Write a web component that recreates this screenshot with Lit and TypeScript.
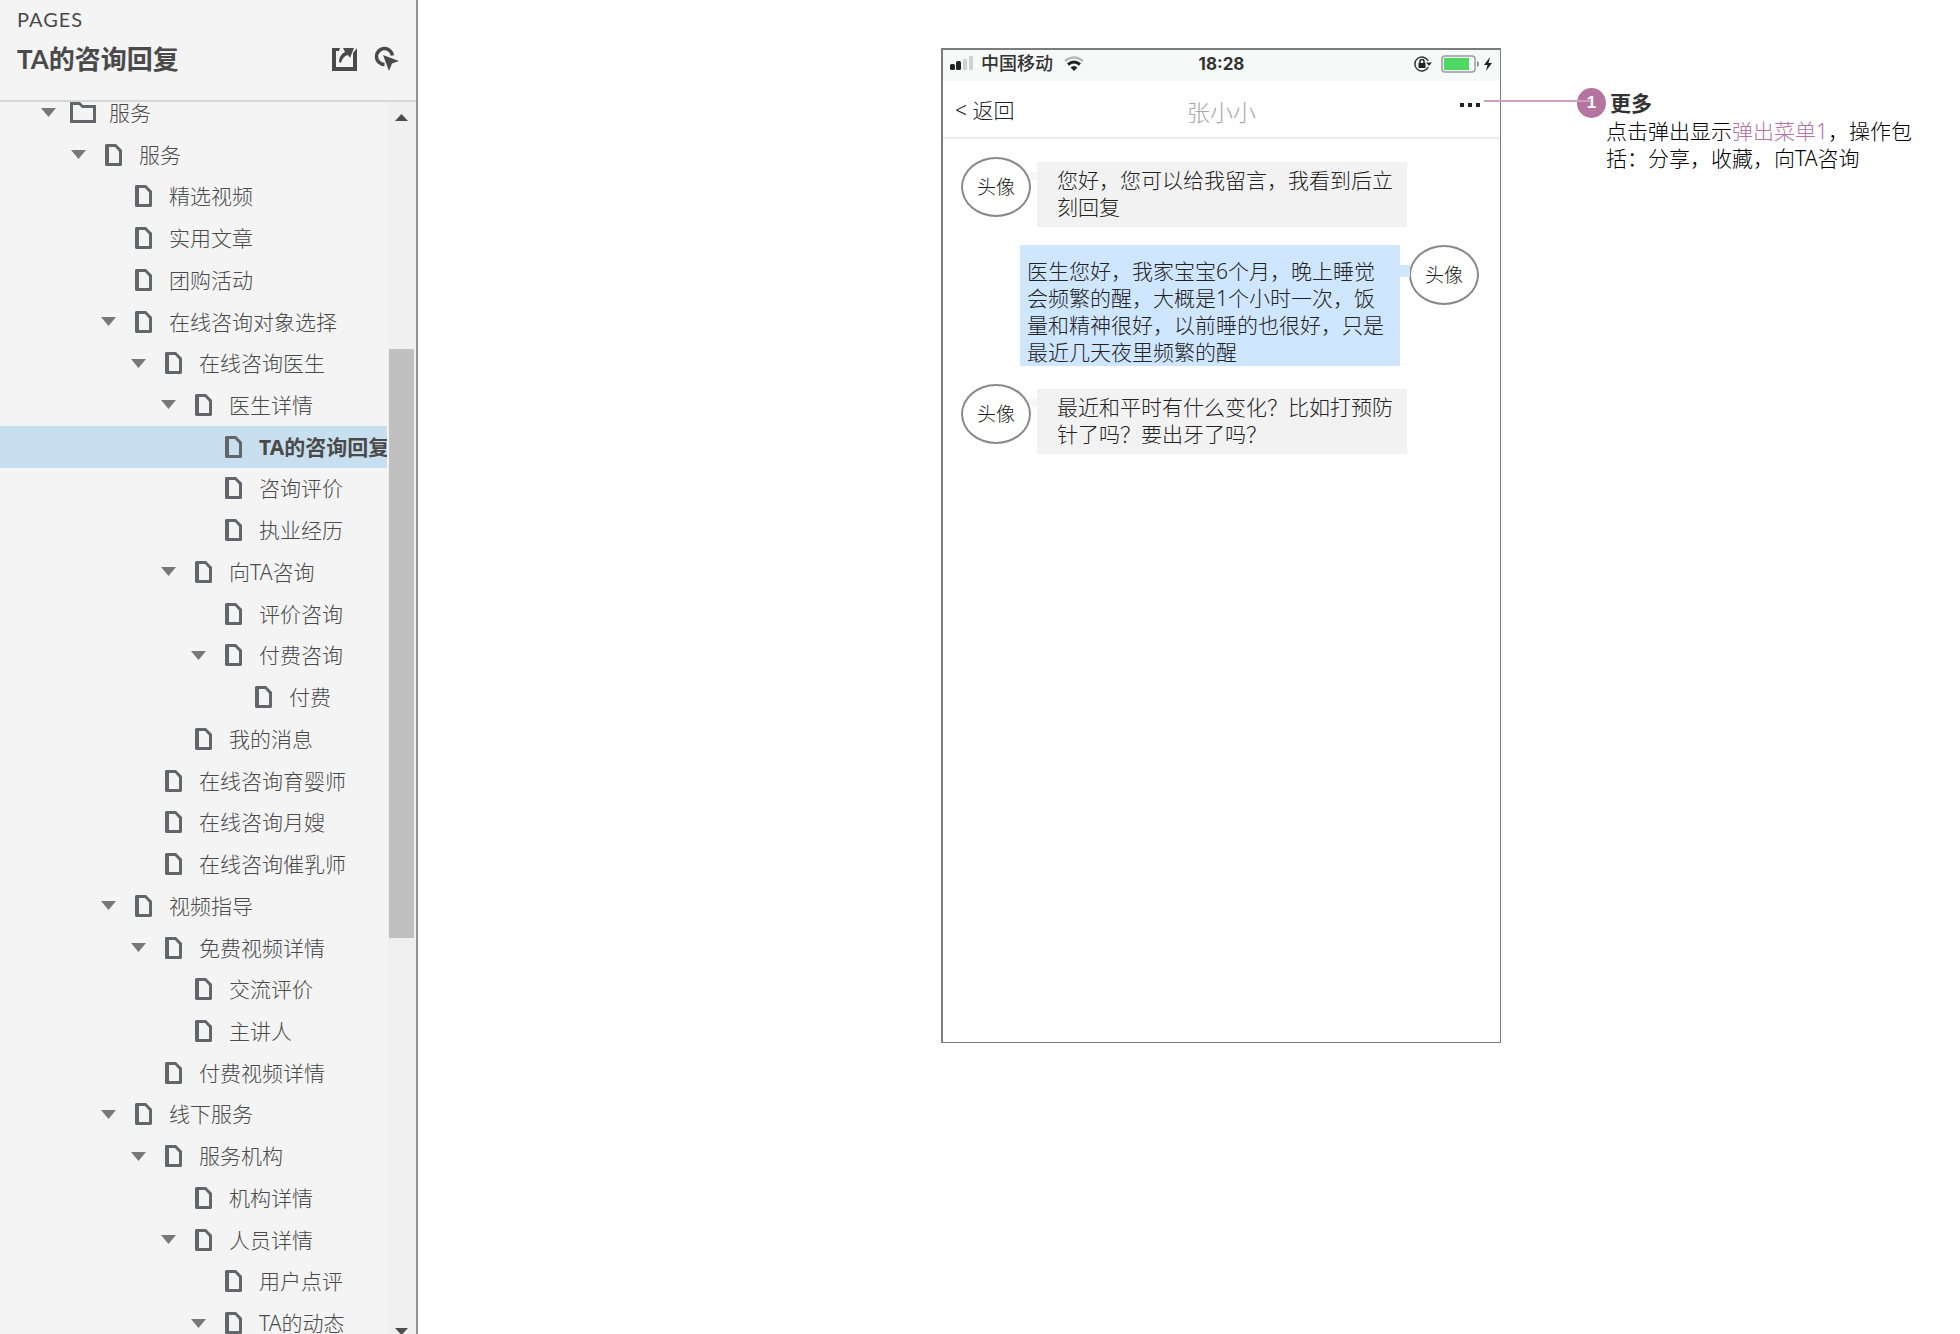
import { LitElement, html, svg, css } from "lit";
import { customElement, property } from "lit/decorators.js";
import { classMap } from "lit/directives/class-map.js";

interface PageNode {
  name: string;
  level: number;
  open?: boolean;
  folder?: boolean;
  current?: boolean;
}

const PAGES: PageNode[] = [
  { name: "服务", level: 0, open: true, folder: true },
  { name: "服务", level: 1, open: true },
  { name: "精选视频", level: 2 },
  { name: "实用文章", level: 2 },
  { name: "团购活动", level: 2 },
  { name: "在线咨询对象选择", level: 2, open: true },
  { name: "在线咨询医生", level: 3, open: true },
  { name: "医生详情", level: 4, open: true },
  { name: "TA的咨询回复", level: 5, current: true },
  { name: "咨询评价", level: 5 },
  { name: "执业经历", level: 5 },
  { name: "向TA咨询", level: 4, open: true },
  { name: "评价咨询", level: 5 },
  { name: "付费咨询", level: 5, open: true },
  { name: "付费", level: 6 },
  { name: "我的消息", level: 4 },
  { name: "在线咨询育婴师", level: 3 },
  { name: "在线咨询月嫂", level: 3 },
  { name: "在线咨询催乳师", level: 3 },
  { name: "视频指导", level: 2, open: true },
  { name: "免费视频详情", level: 3, open: true },
  { name: "交流评价", level: 4 },
  { name: "主讲人", level: 4 },
  { name: "付费视频详情", level: 3 },
  { name: "线下服务", level: 2, open: true },
  { name: "服务机构", level: 3, open: true },
  { name: "机构详情", level: 4 },
  { name: "人员详情", level: 4, open: true },
  { name: "用户点评", level: 5 },
  { name: "TA的动态", level: 5, open: true },
];

const fileIcon = svg`<svg width="17" height="22" viewBox="0 0 17 22"><path fill="#62666b" fill-rule="evenodd" d="M1 0H11L17 6V21L16 22H1L0 21V1ZM4 3V19H14V7.500L10 3Z"/></svg>`;
const folderIcon = svg`<svg width="26" height="21" viewBox="0 0 26 21"><path fill="#62666b" fill-rule="evenodd" d="M0 0H10L13 3H26V21H0ZM3 3V18H23V6H12L9 3Z"/></svg>`;

@customElement("page-tree")
export class PageTree extends LitElement {
  static styles = css`
    :host {
      display: flex;
      flex-direction: column;
      box-sizing: border-box;
      height: 100%;
      background: #f4f4f4;
      border-right: 2px solid #8f949a;
      color: #4a4a4a;
    }
    header {
      flex: none;
      box-sizing: border-box;
      height: 102px;
      padding: 7px 16px 0 17px;
      border-bottom: 2px solid #d6d6d6;
    }
    .caption {
      margin: 0;
      font: 400 20px/24px Lato, "Open Sans", sans-serif;
      letter-spacing: 1px;
    }
    .bar {
      display: flex;
      align-items: center;
      justify-content: space-between;
      height: 56px;
    }
    h1 {
      margin: 0;
      font: 700 26px/32px Lato, "Noto Sans CJK SC", sans-serif;
    }
    .tools {
      display: flex;
      gap: 16px;
    }
    button {
      display: flex;
      align-items: center;
      justify-content: center;
      border: 0;
      padding: 0;
      background: none;
      color: #4a4a4a;
    }
    svg {
      display: block;
    }
    .body {
      flex: 1;
      min-height: 0;
      display: flex;
      overflow: hidden;
    }
    ul {
      flex: 1;
      min-width: 0;
      margin: -10px 0;
      padding: 0;
      list-style: none;
      display: grid;
      grid-auto-rows: 1fr;
      overflow: hidden;
    }
    li {
      display: flex;
      align-items: center;
      gap: 14px;
      min-width: 0;
      padding-left: calc(41px + var(--level) * 30px);
    }
    .current {
      background: #c8dff0;
    }
    .toggle {
      flex: none;
      width: 15px;
      height: 24px;
    }
    a {
      display: flex;
      align-items: center;
      gap: 13px;
      color: inherit;
      text-decoration: none;
      white-space: nowrap;
      font: 300 21px/32px "Noto Sans", "Noto Sans CJK SC", sans-serif;
    }
    .current a {
      font-weight: 700;
    }
    .icon {
      width: 26px;
      display: flex;
      justify-content: center;
    }
    .scroll {
      flex: none;
      box-sizing: border-box;
      width: 28px;
      margin-left: 1px;
      padding-right: 2px;
      display: flex;
      flex-direction: column;
      background: #f0f0f0;
    }
    .up {
      height: 30px;
    }
    .down {
      height: 6px;
      align-items: flex-start;
      overflow: hidden;
    }
    .before {
      flex: 217;
    }
    .thumb {
      flex: 589;
      margin-left: 1px;
      background: #c0c0c0;
    }
    .after {
      flex: 390;
    }
  `;

  render() {
    return html`
      <header>
        <p class="caption">PAGES</p>
        <div class="bar">
          <h1>TA的咨询回复</h1>
          <div class="tools">
            <button type="button" aria-label="Open in new window">
              <svg width="26" height="24" viewBox="0 0 26 24">
                <path d="M0 1H8L7 4H4V20H21V6L25 1V24H0Z" fill="currentColor" />
                <path d="M11 1H22L18 11L16 8C12 9 10 12 9 16L7 15C7 11 9 7 13 5Z" fill="currentColor" />
              </svg>
            </button>
            <button type="button" aria-label="Highlight interactive elements">
              <svg width="26" height="26" viewBox="0 0 26 26" fill="none">
                <path d="M10.500 18.500A8 8 0 1 1 18.400 9.500" stroke="currentColor" stroke-width="3.500" />
                <path d="M9 9L25 15L18 17.500L15 25Z" fill="currentColor" />
              </svg>
            </button>
          </div>
        </div>
      </header>
      <div class="body">
        <ul>
          ${PAGES.map(
            (p) => html`<li class=${classMap({ current: !!p.current })} style="--level:${p.level}">
              ${p.open
                ? html`<button type="button" class="toggle" aria-label="Collapse">
                    <svg width="15" height="9" viewBox="0 0 15 9"><path d="M0 0H15L7.500 9Z" fill="#787878" /></svg>
                  </button>`
                : html`<span class="toggle"></span>`}
              <a href="#page"><span class="icon">${p.folder ? folderIcon : fileIcon}</span>${p.name}</a>
            </li>`
          )}
        </ul>
        <div class="scroll">
          <button type="button" class="up" aria-label="Scroll up">
            <svg width="13" height="7" viewBox="0 0 13 7"><path d="M0 7H13L6.500 0Z" fill="#4c4c4c" /></svg>
          </button>
          <div class="before"></div>
          <div class="thumb"></div>
          <div class="after"></div>
          <button type="button" class="down" aria-label="Scroll down">
            <svg width="13" height="7" viewBox="0 0 13 7"><path d="M0 0H13L6.500 7Z" fill="#4c4c4c" /></svg>
          </button>
        </div>
      </div>
    `;
  }
}

@customElement("chat-message")
export class ChatMessage extends LitElement {
  @property({ type: Boolean, reflect: true }) mine = false;

  static styles = css`
    :host {
      display: flex;
      align-items: flex-start;
      gap: 6px;
      font: 300 21px/27px "Noto Sans", "Noto Sans CJK SC", sans-serif;
      color: #222;
    }
    :host([mine]) {
      flex-direction: row-reverse;
      gap: 9px;
    }
    .avatar {
      flex: none;
      box-sizing: border-box;
      width: 70px;
      height: 60px;
      border: 2px solid #8a8a8a;
      border-radius: 50%;
      background: #fff;
      display: flex;
      align-items: center;
      justify-content: center;
      font-size: 19px;
    }
    .bubble {
      position: relative;
      box-sizing: border-box;
      width: 370px;
      margin: 5px 0 0;
      padding: 5px 8px 6px 20px;
      background: #f2f2f2;
    }
    .bubble::before {
      content: "";
      position: absolute;
      top: 10px;
      right: 100%;
      width: 7px;
      height: 8px;
      background: #f7f7f7;
    }
    :host([mine]) .bubble {
      width: 380px;
      margin: 0;
      padding: 13px 9px 0 7px;
      background: #cfe6ff;
    }
    :host([mine]) .bubble::before {
      top: 20px;
      right: auto;
      left: 100%;
      width: 10px;
      height: 12px;
      background: #cfe6ff;
    }
  `;

  render() {
    return html`<span class="avatar">头像</span>
      <p class="bubble"><slot></slot></p>`;
  }
}

@customElement("phone-screen")
export class PhoneScreen extends LitElement {
  static styles = css`
    :host {
      display: flex;
      flex-direction: column;
      box-sizing: border-box;
      border: 2px solid #7c7c7c;
      border-right-width: 1px;
      border-bottom-width: 1px;
      background: #fff;
      color: #222;
      font: 300 21px/27px "Noto Sans", "Noto Sans CJK SC", sans-serif;
    }
    .status {
      display: grid;
      grid-template-columns: 1fr auto 1fr;
      align-items: center;
      box-sizing: border-box;
      height: 31px;
      padding: 0 7px 4px;
      background: #f7f8f8;
      color: #333;
      font: 700 17px/26px Inter, "Noto Sans CJK SC", sans-serif;
    }
    .left,
    .right {
      display: flex;
      align-items: center;
      gap: 7px;
    }
    .carrier {
      font-size: 18px;
      font-weight: 500;
    }
    .wifi {
      margin-left: 4px;
    }
    .right {
      justify-content: flex-end;
      gap: 9px;
    }
    svg {
      display: block;
    }
    nav {
      display: grid;
      grid-template-columns: 1fr auto 1fr;
      align-items: center;
      height: 56px;
      padding: 0 12px;
      border-bottom: 2px solid #ececec;
    }
    a {
      margin-top: 2px;
      color: inherit;
      text-decoration: none;
    }
    h2 {
      margin: 6px 0 0;
      font: inherit;
      font-size: 23px;
      color: #a8a8a8;
    }
    button {
      justify-self: end;
      width: 24px;
      height: 24px;
      margin: 0 8px 8px 0;
      border: 0;
      padding: 0;
      background: none;
      display: flex;
      align-items: center;
      justify-content: flex-end;
    }
    .chat {
      padding: 18px 21px 0 18px;
      display: flex;
      flex-direction: column;
      gap: 18px;
    }
  `;

  render() {
    return html`
      <div class="status">
        <div class="left">
          <svg width="24" height="16" viewBox="0 0 24 16">
            <rect x="0" y="8" width="5" height="6" rx="1.500" fill="#222" />
            <rect x="6" y="5" width="5" height="9" rx="1.500" fill="#222" />
            <rect x="13" y="3" width="4" height="11" rx="1" fill="#d0d0d0" />
            <rect x="19" y="0" width="4" height="14" rx="1" fill="#d0d0d0" />
          </svg>
          <span class="carrier">中国移动</span>
          <svg class="wifi" width="20" height="16" viewBox="0 0 20 16" fill="none" stroke-width="2.500">
            <path d="M1 5Q10-2 19 5" stroke="#b8b8b8" />
            <path d="M4 8.500Q10 3.500 16 8.500" stroke="#222" stroke-width="3" />
            <path d="M10 15L6.500 11.500Q10 8.500 13.500 11.500Z" fill="#222" />
          </svg>
        </div>
        <span class="time">18:28</span>
        <div class="right">
          <svg width="18" height="16" viewBox="0 0 18 16" fill="none">
            <path d="M14.200 5A7 7 0 1 0 14.200 11" stroke="#333" stroke-width="1.500" />
            <path d="M12 6.500H18L15 10Z" fill="#333" />
            <rect x="4.500" y="7" width="7" height="5" fill="#222" />
            <path d="M6 7V5.500A2 2 0 0 1 10 5.500V7" stroke="#222" stroke-width="1.500" />
          </svg>
          <svg width="52" height="18" viewBox="0 0 52 18" fill="none">
            <rect x="1" y="1" width="33" height="16" rx="3" stroke="#9a9a9a" stroke-width="1.500" />
            <rect x="3" y="3" width="25" height="12" fill="#4bd964" />
            <path d="M36.500 6.500Q38.500 9 36.500 11.500Z" fill="#888" stroke="#888" />
            <path d="M49 2L43 10H46.500L45 16L51 8H47.500Z" fill="#222" />
          </svg>
        </div>
      </div>
      <nav>
        <a href="#back">&lt; 返回</a>
        <h2>张小小</h2>
        <button type="button" aria-label="更多">
          <svg width="20" height="4" viewBox="0 0 20 4" fill="#222">
            <rect width="4" height="4" /><rect x="8" width="4" height="4" /><rect x="16" width="4" height="4" />
          </svg>
        </button>
      </nav>
      <div class="chat">
        <chat-message>您好，您可以给我留言，我看到后立刻回复</chat-message>
        <chat-message mine>医生您好，我家宝宝6个月，晚上睡觉会频繁的醒，大概是1个小时一次，饭量和精神很好，以前睡的也很好，只是最近几天夜里频繁的醒</chat-message>
        <chat-message>最近和平时有什么变化？比如打预防针了吗？要出牙了吗？</chat-message>
      </div>
    `;
  }
}

@customElement("app-root")
export class AppRoot extends LitElement {
  static styles = css`
    :host {
      display: grid;
      grid-template-columns: 418px 1fr;
      height: 100vh;
      overflow: hidden;
      background: #fff;
    }
    main {
      display: flex;
      align-items: flex-start;
      gap: 76px;
      padding: 48px 24px 0 523px;
    }
    phone-screen {
      flex: none;
      width: 560px;
      min-height: 995px;
    }
    .note {
      position: relative;
      width: 342px;
      margin-top: 40px;
      font: 300 21px/27px "Noto Sans", "Noto Sans CJK SC", sans-serif;
      color: #000;
    }
    h3 {
      display: flex;
      align-items: center;
      gap: 4px;
      margin: 0;
      font-size: 21px;
      line-height: 30px;
      color: #333;
    }
    .pin {
      width: 29px;
      height: 30px;
      border-radius: 50%;
      background: #b4749f;
      color: #fff;
      font-family: "Liberation Sans", sans-serif;
      font-size: 17px;
      text-align: center;
    }
    .note::before {
      content: "";
      position: absolute;
      top: 12px;
      right: calc(100% - 13px);
      width: 106px;
      height: 2px;
      background: #cf9fc2;
    }
    p {
      margin: 0;
      padding-left: 29px;
    }
    a {
      color: #b4749f;
      text-decoration: none;
    }
  `;

  render() {
    return html`
      <page-tree lang="zh-CN"></page-tree>
      <main lang="zh-CN">
        <phone-screen></phone-screen>
        <aside class="note">
          <h3><span class="pin">1</span>更多</h3>
          <p>点击弹出显示<a href="#menu">弹出菜单1</a>，操作包括：分享，收藏，向TA咨询</p>
        </aside>
      </main>
    `;
  }
}
